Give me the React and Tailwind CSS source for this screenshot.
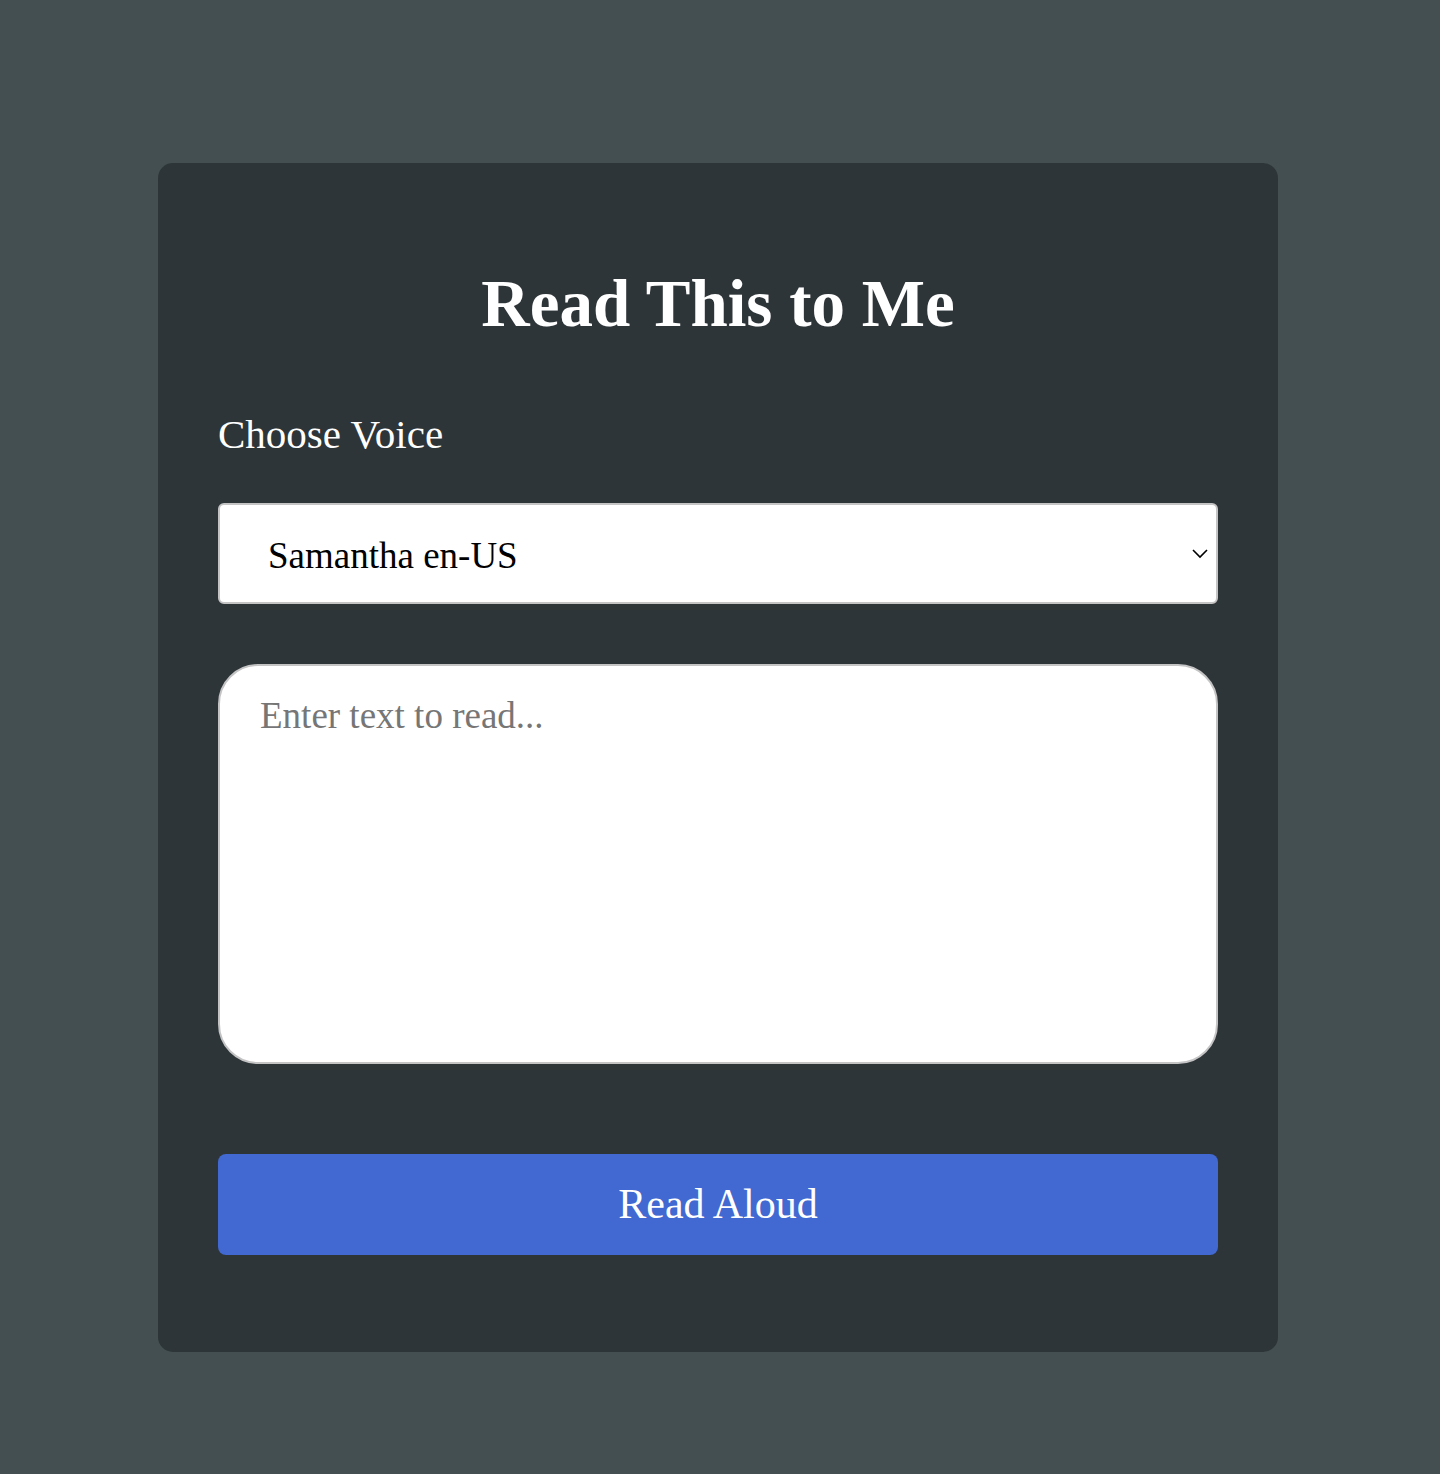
import React, { useState } from "react";

const serif = "font-['Liberation_Serif','DejaVu_Serif',serif]";

export default function App() {
  const [voice, setVoice] = useState("samantha");
  const [text, setText] = useState("");

  return (
    <div className={`min-h-[1474px] bg-[#434f51] pt-[163px] ${serif}`}>
      <div className="ml-[158px] w-[1120px] rounded-[15px] bg-[#2e3539] px-[60px] pt-[100px] pb-[97px]">
        <h1 className="text-center text-[67px] font-bold leading-[80px] text-white">
          Read This to Me
        </h1>

        <label className="mt-[66px] block text-[41px] leading-[50px] text-white">
          Choose Voice
        </label>

        <div className="relative mt-[44px]">
          <select
            value={voice}
            onChange={(e) => setVoice(e.target.value)}
            className="block h-[101px] w-full appearance-none rounded-[6px] border-2 border-[#c4c4c4] bg-white pt-[5px] pl-[48px] text-[37px] text-black outline-none"
          >
            <option value="samantha">Samantha en-US</option>
          </select>
          <svg
            className="pointer-events-none absolute right-[9px] top-[44px] h-[12px] w-[18px]"
            viewBox="0 0 18 12"
            fill="none"
            stroke="#000"
            strokeWidth="1.6"
          >
            <path d="M2 3l7 7 7-7" />
          </svg>
        </div>

        <textarea
          value={text}
          onChange={(e) => setText(e.target.value)}
          placeholder="Enter text to read..."
          className="mt-[60px] block h-[400px] w-full resize-none rounded-[40px] border-2 border-[#c4c4c4] bg-white px-[40px] py-[22px] text-[37px] text-black outline-none placeholder:text-[#767676]"
        />

        <button className="mt-[90px] block h-[101px] w-full rounded-[8px] bg-[#4169d1] text-[42px] text-white">
          Read Aloud
        </button>
      </div>
    </div>
  );
}
